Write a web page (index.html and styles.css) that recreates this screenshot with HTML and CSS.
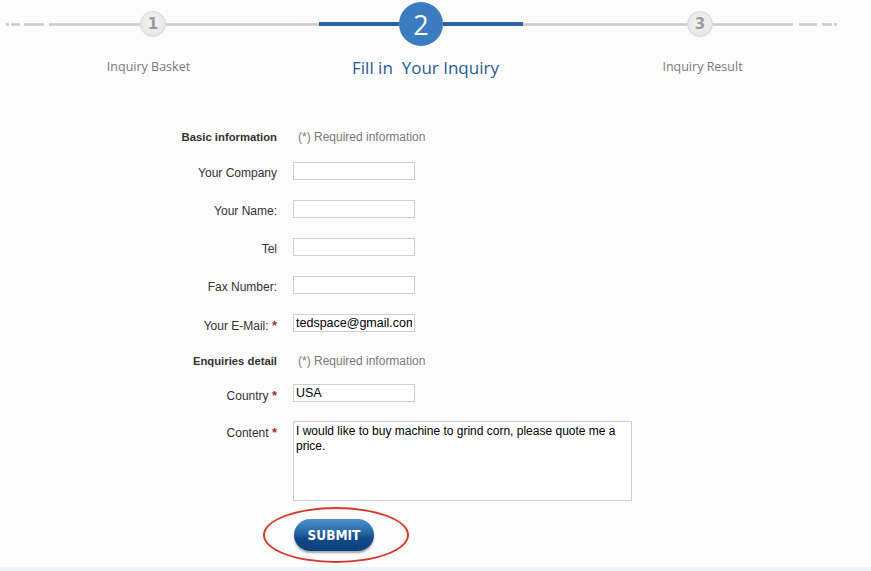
FILE: index.html
```html
<!DOCTYPE html>
<html>
<head>
<meta charset="utf-8">
<link rel="stylesheet" href="styles.css">
</head>
<body>
<div class="page">
  <div class="steps">
    <span class="dash d1"></span>
    <span class="dash d2"></span>
    <span class="dash d3"></span>
    <span class="line l1"></span>
    <span class="circle small">1</span>
    <span class="line l2"></span>
    <span class="line blue b1"></span>
    <span class="circle big">2</span>
    <span class="line blue b2"></span>
    <span class="line l3"></span>
    <span class="circle small">3</span>
    <span class="line l4"></span>
    <span class="dash d4"></span>
    <span class="dash d5"></span>
    <span class="dash d6"></span>
  </div>
  <div class="step-labels">
    <div class="step-label">Inquiry Basket</div>
    <div class="step-label active">Fill in&nbsp; Your Inquiry</div>
    <div class="step-label">Inquiry Result</div>
  </div>

  <form class="form">
    <div class="row head">
      <div class="label strong">Basic information</div>
      <div class="field note">(*) Required information</div>
    </div>
    <div class="row">
      <div class="label">Your Company</div>
      <div class="field"><input class="text" type="text"></div>
    </div>
    <div class="row">
      <div class="label">Your Name:</div>
      <div class="field"><input class="text" type="text"></div>
    </div>
    <div class="row">
      <div class="label">Tel</div>
      <div class="field"><input class="text" type="text"></div>
    </div>
    <div class="row">
      <div class="label">Fax Number:</div>
      <div class="field"><input class="text" type="text"></div>
    </div>
    <div class="row">
      <div class="label">Your E-Mail: <span class="req">*</span></div>
      <div class="field"><input class="text" type="text" value="tedspace@gmail.com"></div>
    </div>
    <div class="row head2">
      <div class="label strong">Enquiries detail</div>
      <div class="field note">(*) Required information</div>
    </div>
    <div class="row short">
      <div class="label">Country <span class="req">*</span></div>
      <div class="field"><input class="text" type="text" value="USA"></div>
    </div>
    <div class="row area">
      <div class="label">Content <span class="req">*</span></div>
      <div class="field"><textarea class="textarea">I would like to buy machine to grind corn, please quote me a price.</textarea></div>
    </div>
    <div class="row submit-row">
      <div class="label"></div>
      <div class="field">
        <div class="submit-wrap">
          <button type="button" class="submit">SUBMIT</button>
          <span class="ring"></span>
        </div>
      </div>
    </div>
  </form>
</div>
<div class="footer-strip"></div>
</body>
</html>
```
FILE: styles.css
```css
html, body {
  margin: 0;
  padding: 0;
  background: #fcfcfc;
}
body {
  width: 871px;
  height: 571px;
  overflow: hidden;
  font-family: "Liberation Sans", Arial, sans-serif;
}
.page {
  height: 567px;
}
.steps {
  height: 48px;
  display: flex;
  align-items: center;
  padding-left: 6px;
}
.dash, .line {
  display: block;
  height: 3px;
  background: linear-gradient(#d8d8d8, #c8c8c8 60%, #e2e2e2);
}
.d1 { width: 3px; }
.d2 { width: 9px; margin-left: 2px; }
.d3 { width: 20px; margin-left: 4px; }
.l1 { width: 91px; margin-left: 5px; }
.l2 { width: 153px; }
.blue {
  height: 4px;
  background: #2b62a3;
}
.b1 { width: 80px; }
.b2 { width: 80px; }
.l3 { width: 164px; }
.l4 { width: 80px; }
.d4 { width: 18px; margin-left: 6px; }
.d5 { width: 10px; margin-left: 5px; }
.d6 { width: 3px; margin-left: 2px; }
.circle {
  display: flex;
  align-items: center;
  justify-content: center;
  border-radius: 50%;
  flex: none;
}
.circle.small {
  width: 24px;
  height: 24px;
  border: 1px solid #d6d6d6;
  background: radial-gradient(circle at 50% 40%, #f4f4f4, #e2e2e2);
  color: #9a9a9a;
  font-family: "DejaVu Sans", sans-serif;
  font-weight: bold;
  font-size: 15px;
}
.circle.big {
  width: 44px;
  height: 44px;
  background: #3a7cbf;
  color: #ffffff;
  font-family: "Open Sans", sans-serif;
  font-size: 27px;
  line-height: 1;
}
.step-labels {
  display: flex;
  padding-left: 10px;
  padding-top: 10px;
  height: 61px;
}
.step-label {
  width: 277px;
  text-align: center;
  font-family: "Open Sans", sans-serif;
  font-size: 12.5px;
  color: #7a7a7a;
  line-height: 18px;
}
.step-label.active {
  font-size: 17px;
  color: #1f5c94;
  line-height: 20px;
}
.form {
  margin: 0;
  padding-top: 1px;
}
.row {
  display: grid;
  grid-template-columns: 277px 1fr;
  column-gap: 16px;
  align-items: center;
  height: 38px;
}
.row.head { height: 34px; }
.row.head2 { height: 34px; }
.row.short { height: 34px; }
.row.area {
  height: auto;
  align-items: start;
  padding-top: 9px;
}
.label {
  text-align: right;
  font-size: 12px;
  color: #333333;
}
.label.strong {
  font-weight: bold;
  font-size: 11.3px;
}
.req {
  color: #a8332e;
  font-size: 13px;
  font-weight: bold;
}
.row.area .label {
  padding-top: 4px;
}
.note {
  padding-left: 5px;
  font-size: 12px;
  color: #7a7a7a;
}
.field {
  display: flex;
  align-items: center;
}
.text {
  box-sizing: border-box;
  width: 122px;
  height: 18px;
  border: 1px solid #cfcfcf;
  background: #ffffff;
  padding: 0 2px;
  margin: 0 0 5px 0;
  font-family: "Liberation Sans", Arial, sans-serif;
  font-size: 12.5px;
  color: #000000;
  outline: none;
}
.textarea {
  box-sizing: border-box;
  display: block;
  width: 339px;
  height: 80px;
  border: 1px solid #cfcfcf;
  background: #ffffff;
  padding: 2px;
  margin: 0;
  resize: none;
  font-family: "Liberation Sans", Arial, sans-serif;
  font-size: 12px;
  line-height: 15px;
  color: #000000;
  overflow: hidden;
}
.row.submit-row {
  height: auto;
  padding-top: 18px;
}
.submit-wrap {
  position: relative;
  width: 80px;
  height: 32px;
  margin-left: 1px;
}
.submit {
  width: 80px;
  height: 32px;
  border: none;
  border-radius: 16px;
  background: linear-gradient(#4f90d1 0%, #23649f 45%, #0f4a8a 60%, #0b3f7a 100%);
  box-shadow: 0 2px 2px rgba(0, 0, 0, 0.35);
  color: #ffffff;
  font-family: "DejaVu Sans Condensed", "DejaVu Sans", sans-serif;
  font-stretch: condensed;
  font-weight: bold;
  font-size: 13.5px;
  padding: 0;
  cursor: pointer;
}
.ring {
  position: absolute;
  left: -31px;
  top: -12px;
  width: 142px;
  height: 52px;
  border: 2px solid #d33a2a;
  border-radius: 50%;
  pointer-events: none;
}
.footer-strip {
  height: 4px;
  background: #edf3f9;
}
```
